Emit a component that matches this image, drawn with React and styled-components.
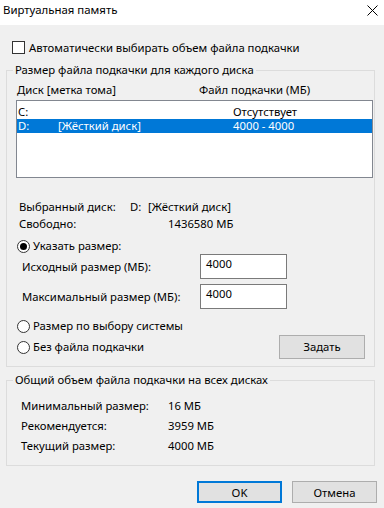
import React from "react";
import styled, { createGlobalStyle } from "styled-components";

const Global = createGlobalStyle`
  html, body { margin: 0; padding: 0; }
  body {
    background: #f0f0f0;
    font-family: "Noto Sans", "Open Sans", sans-serif;
    font-size: 11.3px;
    color: #000;
  }
`;

const Window = styled.div`
  width: 384px;
  height: 508px;
  display: flex;
  flex-direction: column;
  background: #f0f0f0;
  overflow: hidden;
`;

const TitleBar = styled.div`
  height: 25px;
  background: #fff;
  display: flex;
  align-items: flex-start;
  justify-content: space-between;
  padding: 2px 6px 0 3px;
  box-sizing: border-box;
  line-height: 16px;
  font-size: 11.4px;
`;

const CloseIcon = styled.svg`
  width: 11px;
  height: 11px;
  margin-top: 3px;
`;

const Row = styled.div`
  display: flex;
  align-items: center;
  height: ${(p) => p.$h || 16}px;
  margin-top: ${(p) => p.$mt || 0}px;
  margin-left: ${(p) => p.$ml || 0}px;
  line-height: 16px;
  white-space: nowrap;
`;

const CheckBox = styled.span`
  width: 13px;
  height: 13px;
  box-sizing: border-box;
  border: 1px solid #333;
  background: #fff;
  margin-right: 4px;
  flex: none;
`;

const Radio = styled.span`
  width: 13px;
  height: 13px;
  box-sizing: border-box;
  border: 1px solid #333;
  border-radius: 50%;
  background: #fff;
  margin-right: 3px;
  flex: none;
  display: flex;
  align-items: center;
  justify-content: center;
  &::after {
    content: "";
    display: ${(p) => (p.$on ? "block" : "none")};
    width: 7px;
    height: 7px;
    border-radius: 50%;
    background: #000;
  }
`;

const Group = styled.fieldset`
  margin: ${(p) => p.$mt || 0}px 0 0 6px;
  width: 369px;
  box-sizing: border-box;
  border: 1px solid #dcdcdc;
  padding: 0 1px ${(p) => p.$pb || 0}px 9px;
  min-width: 0;
`;

const Legend = styled.legend`
  padding: 0 2px;
  margin-left: -3px;
  line-height: 16px;
`;

const Cell = styled.span`
  display: inline-block;
  width: ${(p) => (p.$w ? `${p.$w}px` : "auto")};
  flex: none;
`;

const ListBox = styled.div`
  margin-top: 2px;
  height: 78px;
  box-sizing: border-box;
  border: 1px solid #828790;
  background: #fff;
  padding-top: 4px;
`;

const ListRow = styled.div`
  display: flex;
  align-items: center;
  height: 14px;
  line-height: 14px;
  padding-left: 1px;
  background: ${(p) => (p.$sel ? "#0078d7" : "transparent")};
  color: ${(p) => (p.$sel ? "#fff" : "#000")};
`;

const Input = styled.div`
  width: 87px;
  height: 25px;
  box-sizing: border-box;
  border: 1px solid #7a7a7a;
  background: #fff;
  padding: 0 0 0 5px;
  line-height: 17px;
  margin-left: auto;
  margin-right: 86px;
`;

const Button = styled.div`
  width: ${(p) => p.$w || 85}px;
  height: ${(p) => p.$h || 22}px;
  box-sizing: border-box;
  border: ${(p) => (p.$default ? "2px solid #0078d7" : "1px solid #adadad")};
  background: #e1e1e1;
  display: flex;
  align-items: center;
  justify-content: center;
  margin-left: ${(p) => (p.$auto ? "auto" : "0")};
  margin-right: ${(p) => p.$mr || 0}px;
  flex: none;
`;

const Footer = styled.div`
  display: flex;
  justify-content: flex-end;
  gap: 10px;
  margin-top: 15px;
  padding-right: 7px;
`;

export default function App() {
  return (
    <Window>
      <Global />
      <TitleBar>
        <span>Виртуальная память</span>
        <CloseIcon viewBox="0 0 11 11">
          <path d="M0.5 0.5 L10.5 10.5 M10.5 0.5 L0.5 10.5" stroke="#000" strokeWidth="1" fill="none" />
        </CloseIcon>
      </TitleBar>

      <Row $h={13} $mt={16} $ml={12}>
        <CheckBox />
        <span>Автоматически выбирать объем файла подкачки</span>
      </Row>

      <Group $mt={8} $pb={7}>
        <Legend>Размер файла подкачки для каждого диска</Legend>
        <Row $mt={4} $ml={1}>
          <Cell $w={182}>Диск [метка тома]</Cell>
          <Cell>Файл подкачки (МБ)</Cell>
        </Row>
        <ListBox>
          <ListRow>
            <Cell $w={215}>C:</Cell>
            <Cell>Отсутствует</Cell>
          </ListRow>
          <ListRow $sel>
            <Cell $w={40}>D:</Cell>
            <Cell $w={175}>[Жёсткий диск]</Cell>
            <Cell>4000 - 4000</Cell>
          </ListRow>
        </ListBox>

        <Row $mt={21} $ml={3}>
          <Cell $w={111}>Выбранный диск:</Cell>
          <Cell $w={18}>D:</Cell>
          <Cell>[Жёсткий диск]</Cell>
        </Row>
        <Row $mt={1} $ml={3}>
          <Cell $w={149}>Свободно:</Cell>
          <Cell>1436580 МБ</Cell>
        </Row>

        <Row $mt={6} $ml={1}>
          <Radio $on />
          <span>Указать размер:</span>
        </Row>
        <Row $h={25} $ml={6}>
          <span>Исходный размер (МБ):</span>
          <Input>4000</Input>
        </Row>
        <Row $h={25} $mt={5} $ml={6}>
          <span>Максимальный размер (МБ):</span>
          <Input>4000</Input>
        </Row>
        <Row $mt={9} $ml={1}>
          <Radio />
          <span>Размер по выбору системы</span>
        </Row>
        <Row $h={24} $mt={1} $ml={1}>
          <Radio />
          <span>Без файла подкачки</span>
          <Button $w={86} $h={24} $auto $mr={8}>Задать</Button>
        </Row>
      </Group>

      <Group $mt={5} $pb={9}>
        <Legend>Общий объем файла подкачки на всех дисках</Legend>
        <Row $h={20} $mt={8} $ml={5}>
          <Cell $w={147}>Минимальный размер:</Cell>
          <Cell>16 МБ</Cell>
        </Row>
        <Row $h={20} $ml={5}>
          <Cell $w={147}>Рекомендуется:</Cell>
          <Cell>3959 МБ</Cell>
        </Row>
        <Row $h={20} $ml={5}>
          <Cell $w={147}>Текущий размер:</Cell>
          <Cell>4000 МБ</Cell>
        </Row>
      </Group>

      <Footer>
        <Button $default>OK</Button>
        <Button>Отмена</Button>
      </Footer>
    </Window>
  );
}
